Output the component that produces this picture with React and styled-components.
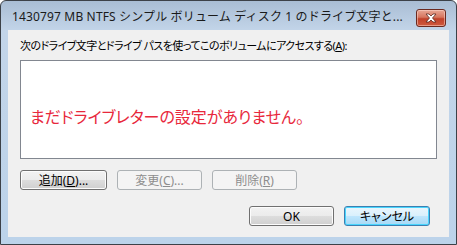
import React from 'react';
import styled, { createGlobalStyle } from 'styled-components';

const GlobalStyle = createGlobalStyle`
  html, body {
    margin: 0;
    padding: 0;
    background: #ffffff;
  }
`;

const uiFont = `"Noto Sans", "Noto Sans CJK JP", sans-serif`;

const Window = styled.div`
  box-sizing: border-box;
  width: 457px;
  height: 245px;
  border: 1px solid #3c4148;
  border-radius: 6px 6px 0 0;
  background: linear-gradient(to bottom, #a9bdd4 0px, #c3d5e9 30px, #bcd3ea 100%);
  display: flex;
  flex-direction: column;
  overflow: hidden;
  font-family: ${uiFont};
`;

const TitleBar = styled.div`
  height: 29px;
  display: flex;
  align-items: center;
  padding: 0 10px 0 11px;
  gap: 6px;
`;

const Title = styled.div`
  flex: 1;
  font-size: 12px;
  letter-spacing: 0.15px;
  color: #1a1a1a;
  white-space: nowrap;
  overflow: hidden;
  padding-top: 1px;
`;

const CloseButton = styled.div`
  box-sizing: border-box;
  width: 30px;
  height: 18px;
  margin-top: 4px;
  border: 1px solid #6b2a20;
  border-radius: 3px;
  background: linear-gradient(to bottom, #e8a795 0%, #d7765f 45%, #c0412a 55%, #cf5a3e 100%);
  box-shadow: inset 0 0 0 1px rgba(255, 220, 210, 0.5);
  display: flex;
  align-items: center;
  justify-content: center;
`;

const Client = styled.div`
  flex: 1;
  margin: 0 7px 7px 7px;
  background: #f0f0f0;
  display: flex;
  flex-direction: column;
  padding: 8px 12px 0 12px;
`;

const Label = styled.div`
  font-size: 11px;
  letter-spacing: -0.55px;
  color: #000;
  line-height: 16px;
  font-feature-settings: "palt";
  white-space: nowrap;
  u {
    text-decoration: underline;
  }
`;

const ListBox = styled.div`
  box-sizing: border-box;
  margin-top: 6px;
  height: 99px;
  border: 1px solid #828790;
  background: #ffffff;
  display: flex;
  align-items: center;
  padding: 12px 0 0 9px;
`;

const EmptyText = styled.span`
  font-size: 16px;
  color: #e8283c;
  font-feature-settings: "palt";
  white-space: nowrap;
`;

const ButtonRow = styled.div`
  display: flex;
  gap: 10px;
  margin-top: ${({ $top }) => $top}px;
  justify-content: ${({ $end }) => ($end ? 'flex-end' : 'flex-start')};
  padding-right: ${({ $end }) => ($end ? 7 : 0)}px;
`;

const Button = styled.div`
  box-sizing: border-box;
  width: ${({ $w }) => $w || 87}px;
  height: 20px;
  border-radius: 3px;
  display: flex;
  align-items: center;
  justify-content: center;
  font-size: 12px;
  font-feature-settings: "palt";
  border: 1px solid ${({ $disabled, $default }) => ($disabled ? '#adb2b5' : $default ? '#3c7fb1' : '#707070')};
  color: ${({ $disabled }) => ($disabled ? '#8d8d8d' : '#000')};
  background: ${({ $disabled, $default }) =>
    $disabled
      ? '#f4f4f4'
      : $default
      ? 'linear-gradient(to bottom, #eaf6fd 0%, #d9f0fc 50%, #bee6fd 51%, #a7d9f5 100%)'
      : 'linear-gradient(to bottom, #f2f2f2 0%, #ebebeb 50%, #dddddd 51%, #cfcfcf 100%)'};
  box-shadow: ${({ $disabled, $default }) =>
    $disabled ? 'none' : $default ? 'inset 0 0 0 1px #48d5fd' : 'inset 0 0 0 1px #fcfcfc'};
  u {
    text-decoration: underline;
  }
`;

const CloseIcon = () => (
  <svg width="14" height="10" viewBox="0 0 14 10">
    <path
      d="M2 1 L5 1 L7 3 L9 1 L12 1 L8.5 5 L12 9 L9 9 L7 7 L5 9 L2 9 L5.5 5 Z"
      fill="#ffffff"
      stroke="#5b2a22"
      strokeWidth="0.8"
      strokeLinejoin="round"
    />
  </svg>
);

export default function App() {
  return (
    <>
      <GlobalStyle />
      <Window>
        <TitleBar>
          <Title>1430797 MB NTFS シンプル ボリューム ディスク 1 のドライブ文字と...</Title>
          <CloseButton>
            <CloseIcon />
          </CloseButton>
        </TitleBar>
        <Client>
          <Label>
            次のドライブ文字とドライブ パスを使ってこのボリュームにアクセスする(<u>A</u>):
          </Label>
          <ListBox>
            <EmptyText>まだドライブレターの設定がありません。</EmptyText>
          </ListBox>
          <ButtonRow $top={11}>
            <Button>
              追加(<u>D</u>)...
            </Button>
            <Button $disabled $w={85}>
              変更(<u>C</u>)...
            </Button>
            <Button $disabled $w={85}>
              削除(<u>R</u>)
            </Button>
          </ButtonRow>
          <ButtonRow $top={16} $end>
            <Button $w={85}>OK</Button>
            <Button $default $w={86}>
              キャンセル
            </Button>
          </ButtonRow>
        </Client>
      </Window>
    </>
  );
}
